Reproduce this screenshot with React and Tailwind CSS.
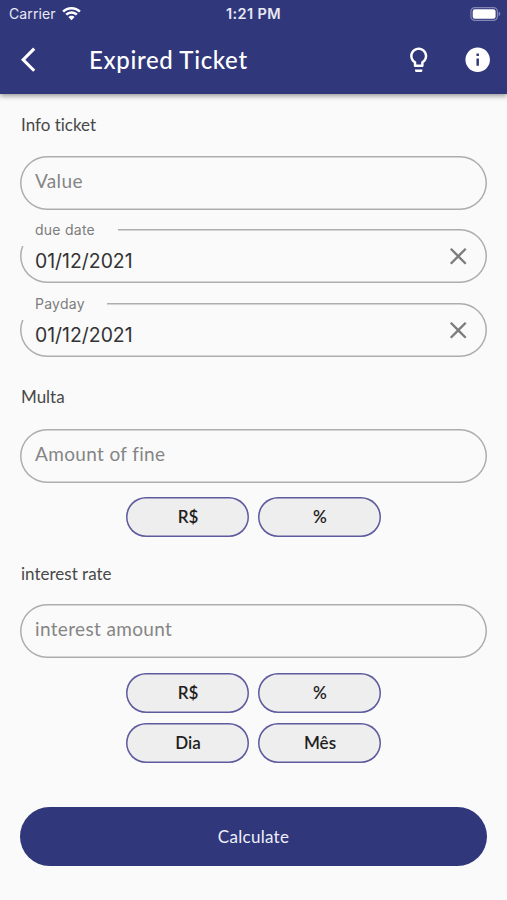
import { useState } from "react";
import { MdArrowBackIos, MdClose, MdInfo, MdLightbulbOutline } from "react-icons/md";

function StatusBar() {
  return (
    <div className="h-[28px] px-[9px] grid grid-cols-3 items-center font-['Inter',sans-serif] text-[#e9eaf6]">
      <div className="flex items-center gap-[6px]">
        <span className="text-[14px] leading-[28px] tracking-[0.1px]">Carrier</span>
        <svg width="19" height="14" viewBox="0 0 19 14" fill="#fff">
          <path d="M9.5 0C13.1 0 16.4 1.4 18.8 3.7L17 5.5C15 3.6 12.4 2.5 9.5 2.5S4 3.6 2 5.5L.2 3.7C2.6 1.4 5.9 0 9.5 0z" />
          <path d="M9.5 4.3c2.4 0 4.6.9 6.2 2.5l-1.8 1.8a6.3 6.3 0 0 0-8.8 0L3.3 6.8a8.9 8.9 0 0 1 6.2-2.5z" />
          <path d="M9.5 8.7c1.2 0 2.3.5 3.1 1.200L9.500 13.200 6.400 9.900c.8-.7 1.900-1.200 3.100-1.200z" />
        </svg>
      </div>
      <span className="text-[14.5px] leading-[28px] font-semibold text-center whitespace-nowrap tracking-[0.4px]">1:21 PM</span>
      <svg className="justify-self-end mr-[-3px]" width="31" height="14" viewBox="0 0 31 14">
        <rect x=".9" y=".6" width="26.5" height="12.8" rx="4" fill="none" stroke="#8385b4" strokeWidth="1.2" />
        <rect x="2.7" y="2.3" width="22.9" height="9.4" rx="2.2" fill="#fff" />
        <path d="M28.6 4.8v4.4c1-.3 1.7-1.2 1.7-2.2s-.7-1.9-1.7-2.2z" fill="#8385b4" />
      </svg>
    </div>
  );
}

function Header() {
  return (
    <header className="h-[94px] bg-[#31377b] text-white shadow-[0_2px_5px_rgba(0,0,0,0.4)]">
      <StatusBar />
      <div className="h-[64px] flex items-center pl-[20px] pr-[15px]">
        <button className="w-[69px] flex" aria-label="Back">
          <MdArrowBackIos size={29.4} className="ml-[0.5px]" />
        </button>
        <h1 className="flex-1 text-[24px] leading-[32px] font-medium tracking-[0.65px]">Expired Ticket</h1>
        <button className="mr-[29px]" aria-label="Tips">
          <MdLightbulbOutline size={29.4} />
        </button>
        <button aria-label="Info">
          <MdInfo size={29.4} />
        </button>
      </div>
    </header>
  );
}

function SectionTitle({ children }) {
  return <h2 className="h-[22px] pl-px text-[17px] leading-[22px] text-[#484848]">{children}</h2>;
}

function TextField({ label }) {
  return (
    <input
      type="text"
      placeholder={label}
      className="block w-full h-[54px] rounded-full shadow-[inset_0_0_0_1.5px_#adadad] bg-transparent px-[15px] pb-[5px] text-[19px] tracking-[0.35px] text-[#333] placeholder:text-[#858585] outline-none"
    />
  );
}

function DateField({ label, labelClass, value, onClear }) {
  return (
    <div className="relative h-[54px] rounded-full shadow-[inset_0_0_0_1.5px_#adadad] flex items-center justify-between px-[15px] font-['Inter',sans-serif]">
      {/* label sits in a notch of the outline */}
      <span className={`absolute -left-px -top-[12px] h-[29px] pl-[16px] bg-[#fafafa] text-[14px] leading-[25px] tracking-[0.25px] text-[#7d7d7d] ${labelClass}`}>
        {label}
      </span>
      <span className="pt-[9px] text-[19.4px] leading-[24px] text-[#333]">{value}</span>
      <button onClick={onClear} className="text-[#7d7d7d]" aria-label={`Clear ${label}`}>
        <MdClose size={28.5} />
      </button>
    </div>
  );
}

function Choice({ children }) {
  return (
    <button className="w-[123px] h-[40px] rounded-full shadow-[inset_0_0_0_1.5px_#5d5a9e] bg-[#eeeeee] pl-px text-[17px] leading-[22px] font-semibold text-[#1f1f1f]">
      {children}
    </button>
  );
}

export default function App() {
  const [dueDate, setDueDate] = useState("01/12/2021");
  const [payday, setPayday] = useState("01/12/2021");

  return (
    <div className="w-[507px] h-[900px] overflow-hidden bg-[#fafafa] font-['Lato',sans-serif] [font-variant-ligatures:none]">
      <Header />

      <main className="px-[20px] pt-[20px]">
        <SectionTitle>Info ticket</SectionTitle>
        <div className="mt-[20px] flex flex-col">
          <TextField label="Value" />
          <div className="mt-[19px]">
            <DateField label="due date" labelClass="w-[99px]" value={dueDate} onClear={() => setDueDate("")} />
          </div>
          <div className="mt-[20px]">
            <DateField label="Payday" labelClass="w-[88px]" value={payday} onClear={() => setPayday("")} />
          </div>
        </div>

        <div className="mt-[29px]">
          <SectionTitle>Multa</SectionTitle>
        </div>
        <div className="mt-[21px]">
          <TextField label="Amount of fine" />
        </div>
        <div className="mt-[14px] flex justify-center gap-[9px]">
          <Choice>R$</Choice>
          <Choice>%</Choice>
        </div>

        <div className="mt-[26px]">
          <SectionTitle>interest rate</SectionTitle>
        </div>
        <div className="mt-[19px]">
          <TextField label="interest amount" />
        </div>
        <div className="mt-[15px] grid grid-cols-[123px_123px] justify-center gap-x-[9px] gap-y-[10px]">
          <Choice>R$</Choice>
          <Choice>%</Choice>
          <Choice>Dia</Choice>
          <Choice>Mês</Choice>
        </div>

        <button className="mt-[44px] block w-full h-[59px] rounded-full bg-[#31377b] text-[17px] tracking-[0.3px] text-[#eeeef8]">
          Calculate
        </button>
      </main>
    </div>
  );
}
